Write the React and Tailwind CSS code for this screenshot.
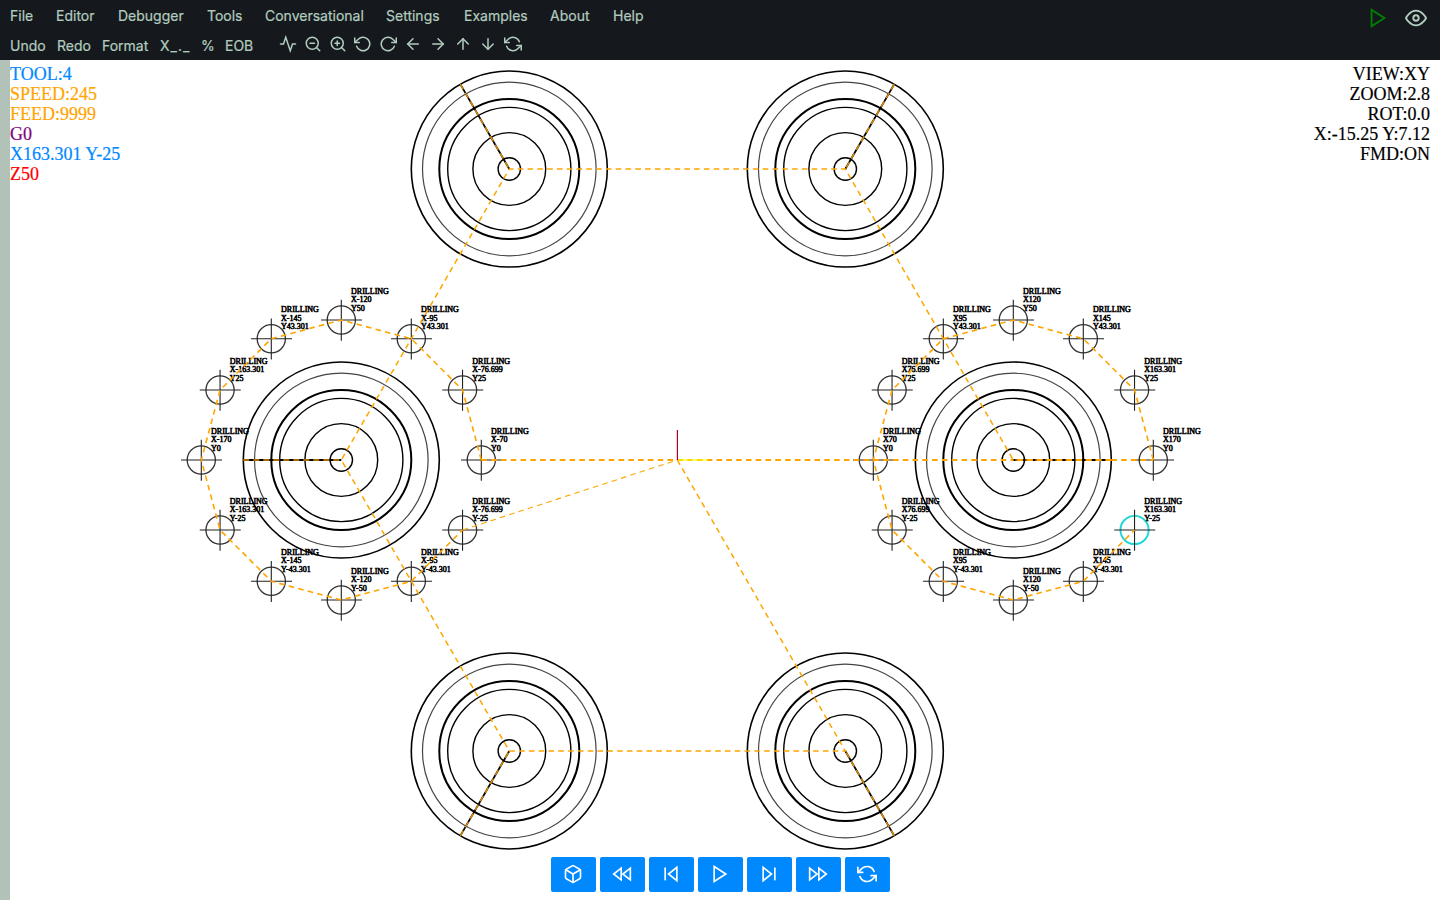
import { FiActivity, FiZoomOut, FiZoomIn, FiRotateCcw, FiRotateCw, FiArrowLeft, FiArrowRight, FiArrowUp, FiArrowDown, FiRefreshCcw, FiPlay, FiEye, FiBox, FiRewind, FiSkipBack, FiSkipForward, FiFastForward } from 'react-icons/fi';

const menus = [
  ['File', 'w-[46px]'], ['Editor', 'w-[62px]'], ['Debugger', 'w-[89px]'], ['Tools', 'w-[58px]'],
  ['Conversational', 'w-[121px]'], ['Settings', 'w-[78px]'], ['Examples', 'w-[86px]'], ['About', 'w-[63px]'], ['Help', 'w-[40px]'],
];
const edits = [
  ['Undo', 'w-[47px]'], ['Redo', 'w-[45px]'], ['Format', 'w-[58px]'], ['X_._', 'w-[41px] tracking-[1px]'], ['%', 'w-[24px]'], ['EOB', 'w-[53px]'],
];
const tools = [FiActivity, FiZoomOut, FiZoomIn, FiRotateCcw, FiRotateCw, FiArrowLeft, FiArrowRight, FiArrowUp, FiArrowDown, FiRefreshCcw];
const controls = [FiBox, FiRewind, FiSkipBack, FiPlay, FiSkipForward, FiFastForward, FiRefreshCcw];

const S = 2.8;
const px = (x) => 677.3 + x * S;
const py = (y) => 460 - y * S;
const H = 103.923;
const bosses = [[-120, 0], [-60, H], [60, H], [120, 0], [60, -H], [-60, -H]];
const ring = [[50, 0], [43.301, 25], [25, 43.301], [0, 50], [-25, 43.301], [-43.301, 25], [-50, 0], [-43.301, -25], [-25, -43.301], [0, -50], [25, -43.301], [43.301, -25]];
const holes = [-120, 120].flatMap((cx) => ring.map(([x, y]) => [cx + x, y]));
const label = (v) => String(Math.round(v * 1000) / 1000);
const poly = (pts) => pts.map(([x, y]) => px(x) + ',' + py(y)).join(' ');

function Boss({ x, y }) {
  const d = Math.hypot(x, y);
  const ex = px(x * (1 + 35 / d));
  const ey = py(y * (1 + 35 / d));
  return (
    <g fill="none" stroke="#000">
      <circle cx={px(x)} cy={py(y)} r="98" strokeWidth="1.6" />
      <circle cx={px(x)} cy={py(y)} r="86.8" strokeWidth="1.2" stroke="#444" />
      <circle cx={px(x)} cy={py(y)} r="70" strokeWidth="2" />
      <circle cx={px(x)} cy={py(y)} r="61.6" strokeWidth="1.4" />
      <circle cx={px(x)} cy={py(y)} r="36.4" strokeWidth="1.4" />
      <circle cx={px(x)} cy={py(y)} r="11.2" strokeWidth="1.4" />
      <line x1={px(x)} y1={py(y)} x2={ex} y2={ey} strokeWidth="1.8" />
      <line x1={ex} y1={ey} x2={px(x)} y2={py(y)} stroke="#e08f00" strokeWidth="1.4" strokeDasharray="6 4" />
    </g>
  );
}

function Hole({ x, y }) {
  const active = x > 160 && x < 165 && y < 0;
  const cx = px(x);
  const cy = py(y);
  return (
    <g>
      <circle cx={cx} cy={cy} r="14.1" fill="none" stroke={active ? '#20d5d5' : '#333'} strokeWidth={active ? 1.9 : 1.3} />
      <path d={`M${cx - 20.3} ${cy}h41M${cx} ${cy - 20.3}v41`} stroke="#222" strokeWidth="1.1" />
      <g fontSize="8" fill="#000" stroke="#000" strokeWidth="0.55">
        <text x={cx + 9.8} y={cy - 26.5}>DRILLING</text>
        <text x={cx + 9.8} y={cy - 18}>{'X' + label(x)}</text>
        <text x={cx + 9.8} y={cy - 9.5}>{'Y' + label(y)}</text>
      </g>
    </g>
  );
}

function Plot() {
  return (
    <svg className="block h-[840px] w-[1430px] [font-family:'Liberation_Serif',serif]" viewBox="10 60 1430 840">
      {bosses.map(([x, y]) => <Boss key={x + ',' + y} x={x} y={y} />)}
      {holes.map(([x, y]) => <Hole key={x + ',' + y} x={x} y={y} />)}
      <g fill="none" stroke="orange" strokeWidth="1.5" strokeDasharray="5.6 4.2">
        <polyline points={poly([[0, 0], [60, -H], [-60, -H], [-120, 0], [-60, H], [60, H], [120, 0]])} />
        <polyline points={poly(ring.map(([x, y]) => [x - 120, y]))} strokeWidth="1.6" />
        <polyline points={poly([[-76.699, -25], [0, 0]])} strokeWidth="1.1" />
        <polyline points={poly([[-70, 0], [0, 0]])} strokeWidth="1.8" />
        <polyline points={poly([[0, 0], [120, 0]])} strokeWidth="1.8" />
        <polyline points={poly([[155, 0], [120, 0]])} strokeWidth="1.8" />
        <polyline points={poly([[155, 0], [170, 0]])} strokeWidth="1.8" />
        <polyline points={poly(ring.map(([x, y]) => [x + 120, y]))} strokeWidth="1.6" />
      </g>
      <line x1="678" y1="460" x2="708" y2="460" stroke="yellow" strokeOpacity="0.7" strokeWidth="1.6" />
      <line x1="677.4" y1="430" x2="677.4" y2="460" stroke="#b0002a" strokeWidth="1.2" />
    </svg>
  );
}

export default function App() {
  return (
    <div className="flex h-[900px] w-[1440px] flex-col overflow-hidden bg-white">
      <header className="flex h-[60px] shrink-0 justify-between bg-[#15191e] pl-[10px] text-[14px] text-[#b2ccbe] [-webkit-text-stroke:0.2px] [font-family:Inter,sans-serif]">
        <div>
          <nav className="flex h-[30px] items-center">
            {menus.map(([name, w]) => <span key={name} className={w + ' shrink-0 whitespace-nowrap'}>{name}</span>)}
          </nav>
          <div className="flex h-[30px] items-center">
            {edits.map(([name, w]) => <span key={name} className={w + ' shrink-0 whitespace-nowrap'}>{name}</span>)}
            <div className="flex gap-[7px] pb-[2px] pl-[1px]">
              {tools.map((Icon, i) => <Icon key={i} size={18} className="[stroke-linejoin:miter]" />)}
            </div>
          </div>
        </div>
        <div className="flex h-9 items-center gap-[16px] pr-[13px]">
          <FiPlay size={22} className="text-[green] [stroke-linejoin:miter]" />
          <FiEye size={22} />
        </div>
      </header>
      <main className="flex h-[840px]">
        <div className="w-[10px] shrink-0 bg-[#b2c2b9]" />
        <section className="relative w-[1430px]">
          <Plot />
          <div className="absolute top-1 left-0 text-[18px] leading-5 [-webkit-text-stroke:0.2px] [font-family:'Liberation_Serif',serif]">
            <p className="text-[#0088ff]">TOOL:4</p>
            <p className="text-[orange]">SPEED:245</p>
            <p className="text-[orange]">FEED:9999</p>
            <p className="text-[purple]">G0</p>
            <p className="text-[#0088ff]">X163.301 Y-25</p>
            <p className="text-[red]">Z50</p>
          </div>
          <div className="absolute top-1 right-[10px] text-right text-[18px] leading-5 text-black [-webkit-text-stroke:0.2px] [font-family:'Liberation_Serif',serif]">
            <p>VIEW:XY</p>
            <p>ZOOM:2.8</p>
            <p>ROT:0.0</p>
            <p>X:-15.25 Y:7.12</p>
            <p>FMD:ON</p>
          </div>
          <div className="absolute bottom-2 left-[541px] flex gap-1">
            {controls.map((Icon, i) => (
              <button key={i} className="flex h-[35px] w-[45px] items-center justify-center rounded-[2px] bg-[#0088ff] pr-[1px] pb-[2px] text-white">
                <Icon size={20} className="[stroke-linejoin:miter]" />
              </button>
            ))}
          </div>
        </section>
      </main>
    </div>
  );
}
